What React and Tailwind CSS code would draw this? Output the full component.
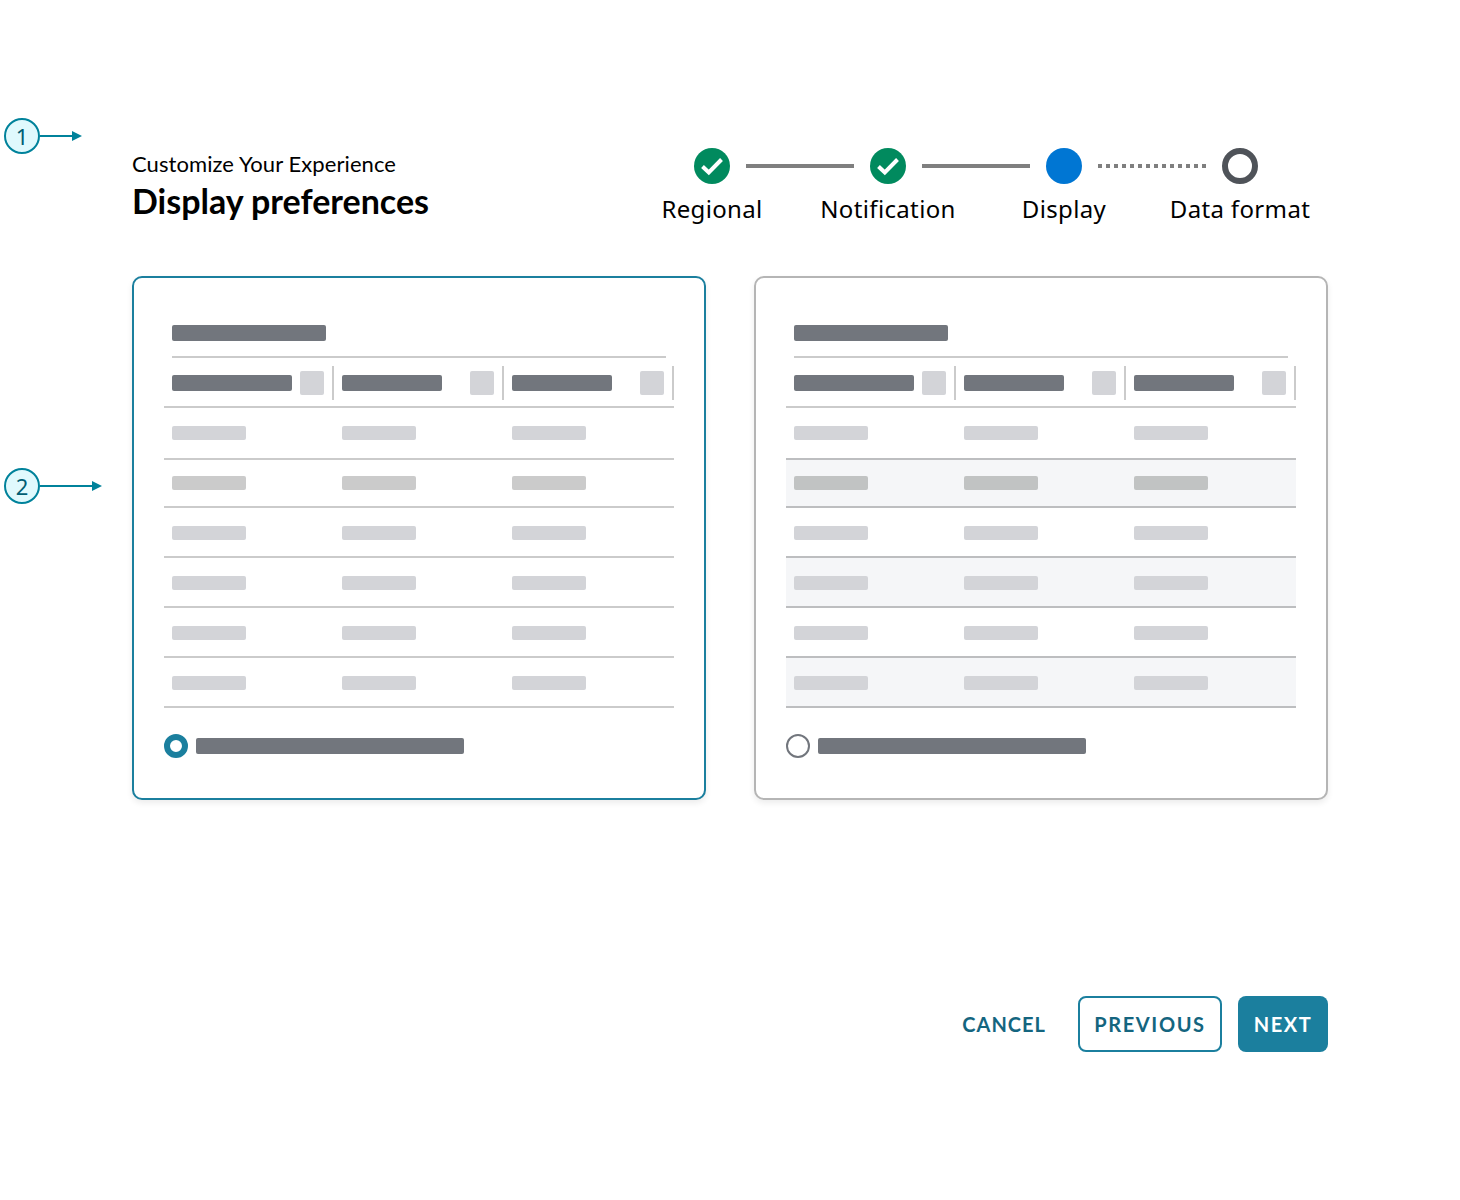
const stepLabels = ["Regional", "Notification", "Display", "Data format"];

function Check() {
  return (
    <svg width="36" height="36" viewBox="0 0 36 36" aria-hidden="true">
      <path d="M8.5 18.5 L14.8 24.5 L27.5 11.5" fill="none" stroke="#fff" strokeWidth="4" />
    </svg>
  );
}

function Annotation({ n, lineClass, top }) {
  return (
    <div className={`absolute left-[4px] flex items-center ${top}`}>
      <div className="w-[36px] h-[36px] rounded-full border-2 border-[#00829b] bg-[#e0f9fd] flex items-center justify-center text-[22px] leading-none text-[#005e73] font-['Noto_Sans',sans-serif]">
        {n}
      </div>
      <div className={`h-[2px] bg-[#00829b] ${lineClass}`} />
      <svg width="10" height="12" viewBox="0 0 10 12" className="-ml-[1px]" aria-hidden="true">
        <path d="M0 1 L10 6 L0 11 Z" fill="#00829b" />
      </svg>
    </div>
  );
}

function Stepper() {
  return (
    <div className="grid grid-cols-[repeat(4,176px)] font-['Noto_Sans',sans-serif]">
      {stepLabels.map((label, i) => (
        <div key={label} className="relative flex flex-col items-center">
          {i < 2 && (
            <div className="w-[36px] h-[36px] rounded-full bg-[#018a5e]">
              <Check />
            </div>
          )}
          {i === 2 && <div className="w-[36px] h-[36px] rounded-full bg-[#0076d3]" />}
          {i === 3 && <div className="w-[36px] h-[36px] rounded-full border-[6px] border-[#4f5359] bg-white" />}
          {i < 2 && <div className="absolute left-[122px] top-[16px] w-[108px] h-[4px] bg-[#7f7f7f]" />}
          {i === 2 && (
            <div className="absolute left-[122px] top-[16px] w-[109px] h-[4px] bg-[repeating-linear-gradient(90deg,#7f7f7f_0_4px,transparent_4px_8px)]" />
          )}
          <div className="mt-[9px] text-[24px] leading-[32px] tracking-[0.35px] text-black whitespace-nowrap">{label}</div>
        </div>
      ))}
    </div>
  );
}

const colWidths = [
  { bar: "w-[120px]", gap: "ml-[8px]" },
  { bar: "w-[100px]", gap: "ml-[28px]" },
  { bar: "w-[100px]", gap: "ml-[28px]" },
];

const rowPads = [
  "h-[52px] pt-[18px]",
  "h-[48px] pt-[16px]",
  "h-[50px] pt-[18px]",
  "h-[50px] pt-[18px]",
  "h-[50px] pt-[18px]",
  "h-[50px] pt-[18px]",
];

function Card({ selected }) {
  return (
    <div
      className={`w-[574px] h-[524px] rounded-[10px] border-2 bg-white pt-[47px] pl-[30px] shadow-[0_3px_6px_rgba(0,0,0,0.08)] ${
        selected ? "border-[#1b7f9e]" : "border-[#b5b5b5]"
      }`}
    >
      <div className="ml-[8px] w-[154px] h-[16px] rounded-[2px] bg-[#72767d]" />
      <div className="ml-[8px] mt-[15px] w-[494px] h-[2px] bg-[#cbcbcb]" />
      <div className="w-[510px] h-[50px] pt-[2px] border-b-2 border-[#cbcbcb] flex items-center">
        {colWidths.map((c, i) => (
          <div key={i} className="w-[170px] pl-[8px] h-[34px] flex items-center border-r-2 border-[#cbcbcb]">
            <div className={`${c.bar} h-[16px] rounded-[2px] bg-[#72767d]`} />
            <div className={`${c.gap} w-[24px] h-[24px] rounded-[2px] bg-[#d3d4d8]`} />
          </div>
        ))}
      </div>
      {rowPads.map((pad, r) => (
        <div
          key={r}
          className={`w-[510px] ${pad} border-b-2 flex ${
            !selected && r % 2 === 1 ? "bg-[#f5f6f8]" : ""
          } ${selected ? "border-[#cbcbcb]" : "border-[#bdbec0]"}`}
        >
          {[0, 1, 2].map((c) => (
            <div key={c} className="w-[170px] pl-[8px]">
              <div className={`w-[74px] h-[14px] rounded-[2px] ${r === 1 ? (selected ? "bg-[#cbcbcb]" : "bg-[#c1c3c3]") : "bg-[#d3d4d8]"}`} />
            </div>
          ))}
        </div>
      ))}
      <div className="mt-[26px] flex items-center gap-[8px]">
        {selected ? (
          <div className="w-[24px] h-[24px] rounded-full border-[6px] border-[#1b7f9e] bg-white" />
        ) : (
          <div className="w-[24px] h-[24px] rounded-full border-2 border-[#72767d] bg-white" />
        )}
        <div className="w-[268px] h-[16px] rounded-[2px] bg-[#72767d]" />
      </div>
    </div>
  );
}

export default function App() {
  return (
    <div className="relative w-[1460px] h-[1200px] bg-white pt-[148px] pl-[132px] pr-[132px] font-['Lato',sans-serif]">
      <Annotation n="1" top="top-[118px]" lineClass="w-[33px]" />
      <Annotation n="2" top="top-[468px]" lineClass="w-[53px]" />

      <div className="flex justify-between h-[128px]">
        <div>
          <div className="text-[22px] leading-[32px] tracking-[0.08px] text-black">Customize Your Experience</div>
          <div className="mt-[1px] text-[34px] leading-[40px] font-bold text-black">Display preferences</div>
        </div>
        <Stepper />
      </div>

      <div className="flex gap-[48px]">
        <Card selected />
        <Card selected={false} />
      </div>

      <div className="mt-[196px] flex justify-end items-center gap-[16px] text-[20px] font-bold tracking-[1.5px]">
        <button className="px-[16px] h-[56px] tracking-[1px] text-[#14657f]">CANCEL</button>
        <button className="w-[144px] h-[56px] rounded-[8px] border-2 border-[#1b7f9e] bg-white tracking-[1.6px] text-[#14657f]">PREVIOUS</button>
        <button className="w-[90px] h-[56px] rounded-[8px] bg-[#1b7f9e] text-white">NEXT</button>
      </div>
    </div>
  );
}
